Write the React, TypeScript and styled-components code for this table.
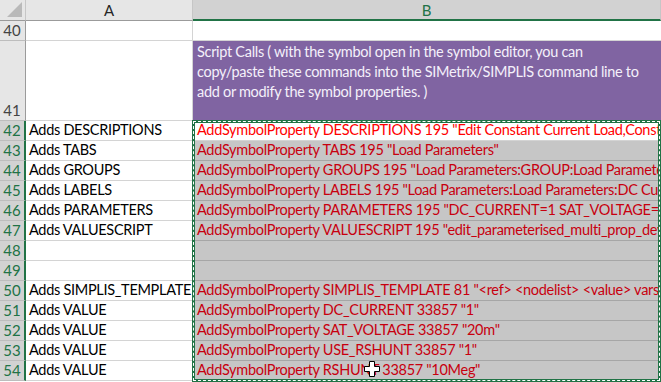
import React from "react";
import styled, { createGlobalStyle } from "styled-components";

const GlobalStyle = createGlobalStyle`
  * { box-sizing: border-box; }
  html, body { margin: 0; padding: 0; background: #ffffff; overflow: hidden; }
  body { font-family: Lato, "Open Sans", sans-serif; }
`;

const green = "#217346";

const Sheet = styled.div`
  position: relative;
  width: 661px;
  height: 382px;
  overflow: hidden;
  font-family: Lato, "Open Sans", sans-serif;
  font-size: 14.5px;
  letter-spacing: -0.3px;
  white-space: nowrap;
`;

const Row = styled.div<{ $h: number }>`
  display: grid;
  grid-template-columns: 26px 167px 1fr;
  height: ${p => p.$h}px;
`;

const Corner = styled.div`
  background: #e6e6e6;
  border-right: 1px solid #c6c6c6;
  border-bottom: 1px solid #9b9b9b;
  display: flex;
  align-items: flex-end;
  justify-content: flex-end;
  padding: 0 3px 3px 0;
`;

const CornerTriangle = styled.span`
  width: 0;
  height: 0;
  border-left: 15px solid transparent;
  border-bottom: 15px solid #b9b9b9;
`;

const ColHeader = styled.div<{ $sel?: boolean }>`
  background: ${p => (p.$sel ? "#d2d2d2" : "#e6e6e6")};
  color: ${p => (p.$sel ? green : "#262626")};
  border-right: 1px solid #c6c6c6;
  border-bottom: ${p => (p.$sel ? `2px solid ${green}` : "1px solid #9b9b9b")};
  display: flex;
  align-items: center;
  justify-content: center;
  font-size: 15px;
  letter-spacing: 0;
`;

const RowHeader = styled.div<{ $sel?: boolean }>`
  background: ${p => (p.$sel ? "#d2d2d2" : "#e6e6e6")};
  color: ${p => (p.$sel ? green : "#444444")};
  border-right: ${p => (p.$sel ? `2px solid ${green}` : "1px solid #9b9b9b")};
  border-bottom: 1px solid #bdbdbd;
  display: flex;
  align-items: flex-end;
  justify-content: center;
  padding: 0 ${p => (p.$sel ? "0" : "1px")} 1px 0;
  font-size: 15px;
  letter-spacing: 0;
  line-height: 18px;
`;

const CellA = styled.div`
  border-right: 1px solid #d4d4d4;
  border-bottom: 1px solid #d4d4d4;
  display: flex;
  align-items: flex-end;
  padding: 0 3px 1px;
  color: #000000;
  line-height: 18px;
`;

type Kind = "plain" | "purple" | "active" | "selected";

const CellB = styled.div<{ $kind: Kind }>`
  display: flex;
  flex-direction: column;
  justify-content: ${p => (p.$kind === "purple" ? "flex-start" : "flex-end")};
  padding: ${p => (p.$kind === "purple" ? "1px 4px 0" : "0 4px 1px")};
  line-height: ${p => (p.$kind === "purple" ? "20px" : "18px")};
  background: ${p =>
    p.$kind === "purple" ? "#8064a2" : p.$kind === "selected" ? "#c6c6c6" : "#ffffff"};
  color: ${p =>
    p.$kind === "purple" ? "#f4f0fa" : p.$kind === "active" ? "#ff0000" : "#c8000f"};
  border-bottom: 1px solid
    ${p => (p.$kind === "selected" ? "#a6a6a6" : p.$kind === "purple" ? "#8064a2" : "#d4d4d4")};
`;

const CopyRange = styled.div`
  position: absolute;
  left: 192px;
  top: 120px;
  width: 469px;
  height: 262px;
  border: 3px solid ${green};
  pointer-events: none;
  &::after {
    content: "";
    position: absolute;
    inset: -2px;
    border: 1px dashed #ffffff;
  }
`;

const Cursor = styled.svg`
  position: absolute;
  left: 364px;
  top: 361px;
`;

const rows: { n: number; a: string; b: string; kind: Kind }[] = [
  { n: 42, a: "Adds DESCRIPTIONS", b: 'AddSymbolProperty DESCRIPTIONS 195 "Edit Constant Current Load,Constant Current Load"', kind: "active" },
  { n: 43, a: "Adds TABS", b: 'AddSymbolProperty TABS 195 "Load Parameters"', kind: "selected" },
  { n: 44, a: "Adds GROUPS", b: 'AddSymbolProperty GROUPS 195 "Load Parameters:GROUP:Load Parameters"', kind: "selected" },
  { n: 45, a: "Adds LABELS", b: 'AddSymbolProperty LABELS 195 "Load Parameters:Load Parameters:DC Current"', kind: "selected" },
  { n: 46, a: "Adds PARAMETERS", b: 'AddSymbolProperty PARAMETERS 195 "DC_CURRENT=1 SAT_VOLTAGE=20m USE_RSHUNT=1"', kind: "selected" },
  { n: 47, a: "Adds VALUESCRIPT", b: 'AddSymbolProperty VALUESCRIPT 195 "edit_parameterised_multi_prop_dev"', kind: "selected" },
  { n: 48, a: "", b: "", kind: "selected" },
  { n: 49, a: "", b: "", kind: "selected" },
  { n: 50, a: "Adds SIMPLIS_TEMPLATE", b: 'AddSymbolProperty SIMPLIS_TEMPLATE 81 "<ref> <nodelist> <value> vars: DC_CURRENT"', kind: "selected" },
  { n: 51, a: "Adds VALUE", b: 'AddSymbolProperty DC_CURRENT 33857 "1"', kind: "selected" },
  { n: 52, a: "Adds VALUE", b: 'AddSymbolProperty SAT_VOLTAGE 33857 "20m"', kind: "selected" },
  { n: 53, a: "Adds VALUE", b: 'AddSymbolProperty USE_RSHUNT 33857 "1"', kind: "selected" },
  { n: 54, a: "Adds VALUE", b: 'AddSymbolProperty RSHUNT 33857 "10Meg"', kind: "selected" },
];

export default function App() {
  return (
    <>
      <GlobalStyle />
      <Sheet>
        <Row $h={21}>
          <Corner>
            <CornerTriangle />
          </Corner>
          <ColHeader>A</ColHeader>
          <ColHeader $sel>B</ColHeader>
        </Row>
        <Row $h={20}>
          <RowHeader>40</RowHeader>
          <CellA />
          <CellB $kind="plain" />
        </Row>
        <Row $h={80}>
          <RowHeader>41</RowHeader>
          <CellA />
          <CellB $kind="purple">
            <span>Script Calls ( with the symbol open in the symbol editor, you can</span>
            <span>copy/paste these commands into the SIMetrix/SIMPLIS command line to</span>
            <span>add or modify the symbol properties. )</span>
          </CellB>
        </Row>
        {rows.map(r => (
          <Row $h={20} key={r.n}>
            <RowHeader $sel>{r.n}</RowHeader>
            <CellA>{r.a}</CellA>
            <CellB $kind={r.kind}>{r.b}</CellB>
          </Row>
        ))}
        <CopyRange />
        <Cursor width="16" height="16" viewBox="0 0 16 16">
          <path
            d="M5.5 0.5h5v5h5v5h-5v5h-5v-5h-5v-5h5z"
            fill="#ffffff"
            stroke="#000000"
            strokeWidth="1"
          />
        </Cursor>
      </Sheet>
    </>
  );
}
